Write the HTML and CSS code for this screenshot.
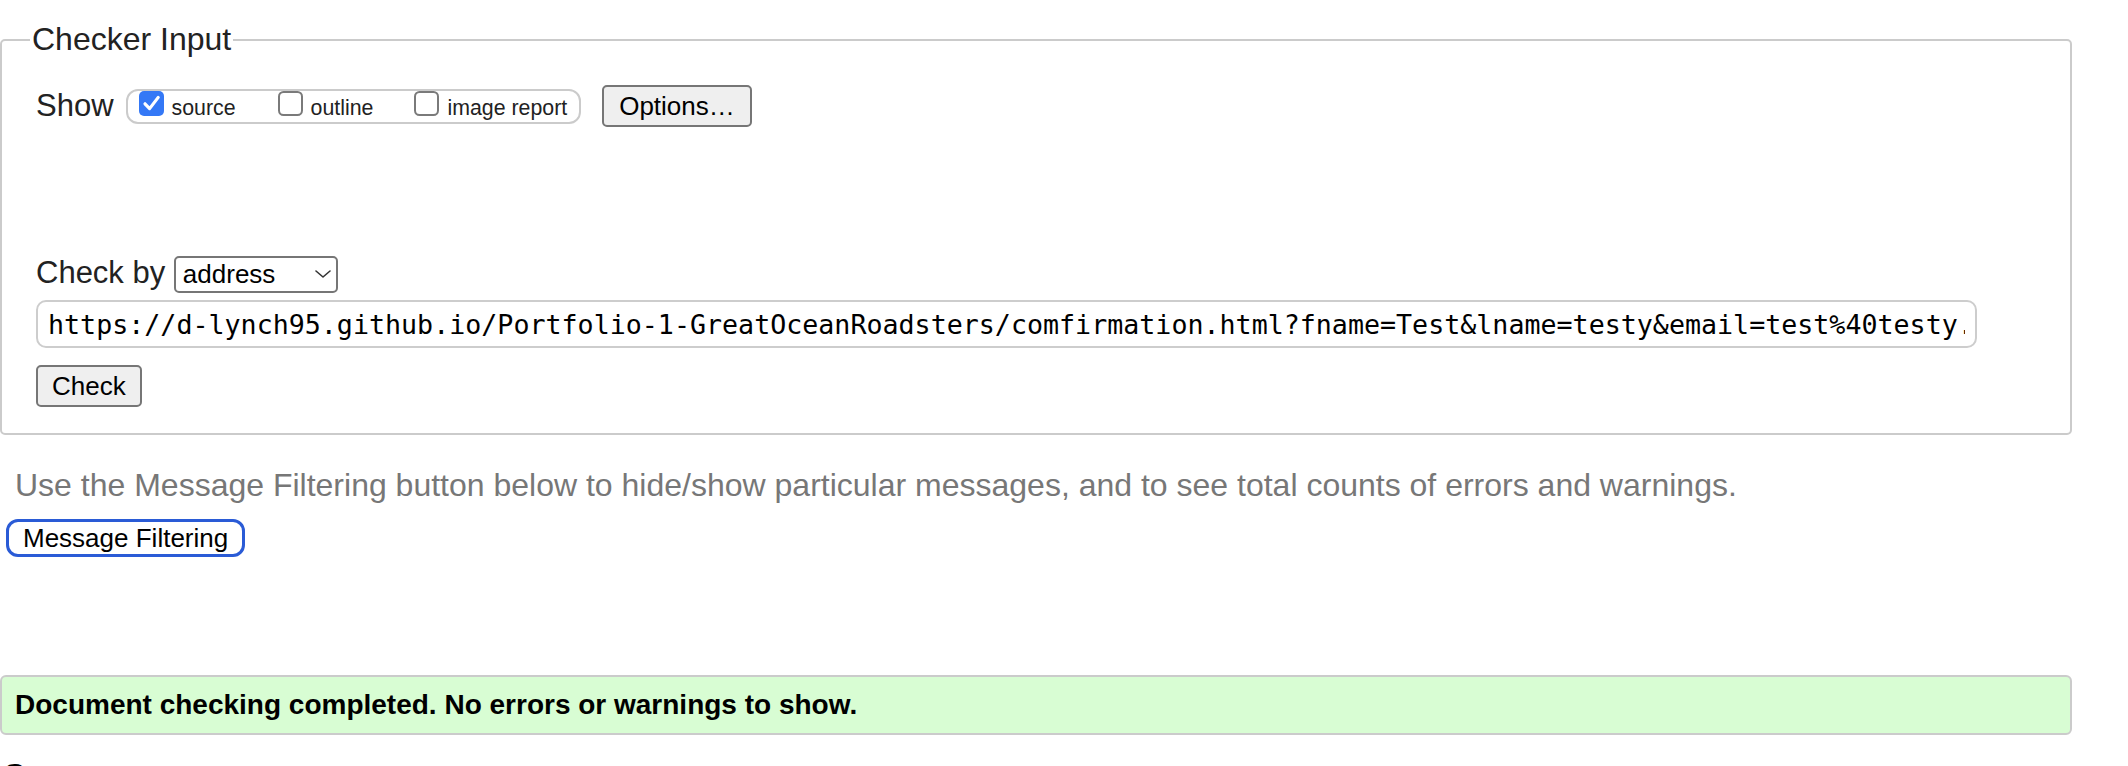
FILE: index.html
```html
<!DOCTYPE html>
<html lang="en">
<head>
<meta charset="utf-8">
<title>Checker Input</title>
<link rel="stylesheet" href="styles.css">
</head>
<body>
<form class="checker-form">
  <fieldset class="checker">
    <legend class="legend">Checker Input</legend>
    <div class="show-row">
      <span class="row-label show-label">Show</span>
      <span class="show-box"><label class="opt"><span class="cb cb-on"><svg viewBox="0 0 25 25" width="25" height="25"><rect x="0" y="0" width="25" height="25" rx="5" fill="#3478f6"/><path d="M6 12.8 L10.6 17.6 L19.2 6.4" fill="none" stroke="#fff" stroke-width="3.2" stroke-linecap="round" stroke-linejoin="round"/></svg></span><span class="opt-text">source</span></label><label class="opt opt-gap"><span class="cb"><svg viewBox="0 0 25 25" width="25" height="25"><rect x="1" y="1" width="23" height="23" rx="4.5" fill="#fff" stroke="#7a7a7a" stroke-width="2"/></svg></span><span class="opt-text">outline</span></label><label class="opt opt-gap2"><span class="cb"><svg viewBox="0 0 25 25" width="25" height="25"><rect x="1" y="1" width="23" height="23" rx="4.5" fill="#fff" stroke="#7a7a7a" stroke-width="2"/></svg></span><span class="opt-text">image report</span></label></span>
      <button type="button" class="btn btn-options">Options…</button>
    </div>
    <div class="checkby-row"><span class="row-label">Check by</span> <span class="select-wrap"><select class="select"><option>address</option></select><svg class="chev" viewBox="0 0 16 8" width="16" height="8"><path d="M1 1 L8 7 L15 1" fill="none" stroke="#333" stroke-width="1.6" stroke-linecap="round" stroke-linejoin="round"/></svg></span></div>
    <input class="url" type="text" value="https://d-lynch95.github.io/Portfolio-1-GreatOceanRoadsters/comfirmation.html?fname=Test&amp;lname=testy&amp;email=test%40testy.">
    <div class="check-row"><button type="button" class="btn">Check</button></div>
  </fieldset>
</form>
<p class="hint">Use the Message Filtering button below to hide/show particular messages, and to see total counts of errors and warnings.</p>
<button type="button" class="btn-filter">Message Filtering</button>
<div class="success">Document checking completed. No errors or warnings to show.</div>
<h2 class="source-h">Source</h2>
</body>
</html>
```

FILE: styles.css
```css
html, body {
  margin: 0;
  padding: 0;
  background: #fff;
}
body {
  padding-top: 21px;
  font-family: "Liberation Sans", Arial, Helvetica, sans-serif;
  color: #222;
  overflow: hidden;
}
.checker-form {
  margin: 0;
}
.checker {
  margin: 0 56px 0 0;
  padding: 0 34px 26px 34px;
  border: 2px solid #cbcbcb;
  border-radius: 5px;
  min-inline-size: auto;
}
.legend {
  font-size: 32px;
  line-height: normal;
  padding: 0 2px;
  margin-left: -6px;
  color: #222;
}
.show-row {
  display: flex;
  align-items: center;
  height: 42px;
  margin-top: 27px;
}
.row-label {
  font-size: 31px;
  line-height: normal;
  color: #222;
}
.show-label {
  margin-right: 12px;
}
.show-box {
  display: inline-block;
  border: 2px solid #cbcbcb;
  border-radius: 12px;
  padding: 0 12px 1px 11px;
  font-size: 21.33px;
  line-height: normal;
  margin-right: 21px;
  white-space: nowrap;
}
.opt {
  color: #222;
}
.opt-gap {
  margin-left: 42px;
}
.opt-gap2 {
  margin-left: 41px;
}
.cb {
  display: inline-block;
  width: 25px;
  height: 25px;
  vertical-align: -1px;
}
.cb svg {
  display: block;
}
.opt-text {
  margin-left: 8px;
}
.btn {
  font-family: "Liberation Sans", Arial, Helvetica, sans-serif;
  font-size: 26px;
  height: 42px;
  padding: 0 14px;
  background: #efefef;
  color: #000;
  border: 2px solid #767676;
  border-radius: 5px;
  line-height: normal;
}
.btn-options {
  padding: 0 15px;
}
.checkby-row {
  margin-top: 128px;
  font-size: 31px;
  line-height: normal;
  height: 37px;
}
.select-wrap {
  position: relative;
  display: inline-block;
}
.select {
  -webkit-appearance: none;
  appearance: none;
  font-family: "Liberation Sans", Arial, Helvetica, sans-serif;
  font-size: 26px;
  width: 164px;
  height: 37px;
  padding: 0 0 0 7px;
  border: 2px solid #767676;
  border-radius: 5px;
  background: #fff;
  color: #000;
  vertical-align: baseline;
}
.chev {
  position: absolute;
  right: 7px;
  top: 15px;
}
.url {
  display: block;
  box-sizing: border-box;
  width: 1941px;
  height: 48px;
  margin: 8px 0 0 0;
  padding: 0 10px;
  border: 2px solid #cdcdcd;
  border-radius: 10px;
  font-family: "DejaVu Sans Mono", Menlo, monospace;
  font-size: 26.67px;
  color: #000;
  background: #fff;
}
.check-row {
  margin-top: 17px;
  height: 42px;
}
.hint {
  margin: 32px 0 0 0;
  padding-left: 15px;
  font-size: 32px;
  line-height: normal;
  color: #777;
}
.btn-filter {
  display: block;
  margin: 15px 0 0 6px;
  height: 38px;
  padding: 0 14px;
  font-family: "Liberation Sans", Arial, Helvetica, sans-serif;
  font-size: 26px;
  color: #000;
  background: #fff;
  border: 3px solid #2a5bd6;
  border-radius: 12px;
  line-height: normal;
}
.success {
  box-sizing: border-box;
  display: flex;
  align-items: center;
  height: 60px;
  margin: 118px 56px 0 0;
  padding: 0 13px 0 13px;
  border: 2px solid #cbcbcb;
  border-radius: 6px;
  background: #d8fdd3;
  color: #000;
  font-size: 28px;
  font-weight: bold;
  line-height: normal;
}
.source-h {
  margin: 22px 0 0 0;
  padding-left: 4px;
  font-size: 32px;
  font-weight: bold;
  line-height: normal;
  color: #000;
}
```
